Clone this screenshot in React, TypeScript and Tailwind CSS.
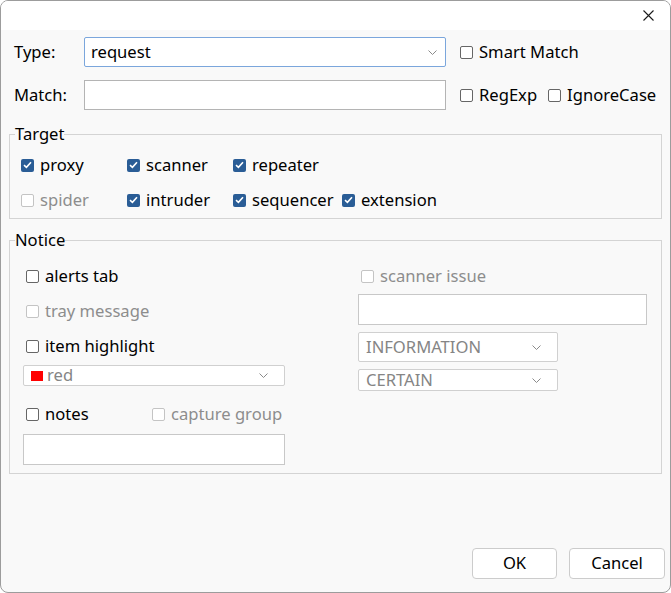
import React from "react";

const font = { fontFamily: '"Noto Sans", "Open Sans", sans-serif' };

type CheckProps = { label: string; checked?: boolean; disabled?: boolean };

const Check = ({ label, checked, disabled }: CheckProps) => (
  <label className="flex h-6 items-center gap-[6px] whitespace-nowrap">
    {checked ? (
      <span className="flex h-[13px] w-[13px] shrink-0 items-center justify-center rounded-[2px] bg-[#2a5d96]">
        <svg width="9" height="8" viewBox="0 0 9 8">
          <path d="M1 4.2 L3.4 6.4 L8 1.2" stroke="white" strokeWidth="1.6" fill="none" />
        </svg>
      </span>
    ) : (
      <span
        className={`h-[13px] w-[13px] shrink-0 rounded-[2px] border bg-white ${
          disabled ? "border-[#c4c4c4]" : "border-[#666666]"
        }`}
      />
    )}
    <span className={disabled ? "text-[#8d8d8d]" : "text-black"}>{label}</span>
  </label>
);

const Chevron = () => (
  <svg width="9" height="5" viewBox="0 0 9 5" className="shrink-0">
    <path d="M0.5 0.5 L4.5 4.5 L8.5 0.5" stroke="#8a8a8a" strokeWidth="1" fill="none" />
  </svg>
);

const Select = ({
  value,
  className,
  swatch,
}: {
  value: string;
  className: string;
  swatch?: boolean;
}) => (
  <div
    className={`flex items-center rounded-[2px] border border-[#d0d0d0] bg-white pl-[7px] pr-[16px] text-[#858585] ${className}`}
  >
    {swatch && <span className="mr-[4px] h-[10px] w-[12px] bg-[#ff0000]" />}
    <span className="flex-1 leading-none">{value}</span>
    <Chevron />
  </div>
);

export default function App() {
  return (
    <div
      style={font}
      className="flex h-[593px] w-[671px] flex-col overflow-hidden rounded-[8px] border border-[#9c9c9c] bg-[#f9f9f9] text-[16.6px] text-black"
    >
      {/* title bar */}
      <div className="flex h-[29px] shrink-0 items-center justify-end bg-white pr-[16px]">
        <svg width="11" height="11" viewBox="0 0 11 11">
          <path d="M0.5 0.5 L10.5 10.5 M10.5 0.5 L0.5 10.5" stroke="#1a1a1a" strokeWidth="1.1" />
        </svg>
      </div>

      <div className="flex flex-1 flex-col pl-[8px] pr-[8px] pt-[7px]">
        {/* type row */}
        <div className="flex h-[30px] items-center">
          <span className="w-[75px] pl-[5px]">Type:</span>
          <div className="flex h-[30px] w-[362px] items-center rounded-[2px] border border-[#7ba6dc] bg-white pl-[6px] pr-[8px]">
            <span className="flex-1">request</span>
            <Chevron />
          </div>
          <div className="ml-[14px]">
            <Check label="Smart Match" />
          </div>
        </div>

        {/* match row */}
        <div className="mt-[13px] flex h-[30px] items-center">
          <span className="w-[75px] pl-[5px]">Match:</span>
          <div className="h-[30px] w-[362px] border border-[#b4b4b4] bg-white" />
          <div className="ml-[14px] flex gap-[11px]">
            <Check label="RegExp" />
            <Check label="IgnoreCase" />
          </div>
        </div>

        {/* target */}
        <fieldset className="mt-[13px] w-[653px] border border-[#d4d4d4] px-[11px] pb-[6px]">
          <legend className="-ml-[6px] leading-[22px]">Target</legend>
          <div className="mt-[8px] flex">
            <div className="w-[106px]">
              <Check label="proxy" checked />
            </div>
            <div className="w-[106px]">
              <Check label="scanner" checked />
            </div>
            <div className="w-[109px]">
              <Check label="repeater" checked />
            </div>
          </div>
          <div className="mt-[11px] flex">
            <div className="w-[106px]">
              <Check label="spider" disabled />
            </div>
            <div className="w-[106px]">
              <Check label="intruder" checked />
            </div>
            <div className="w-[109px]">
              <Check label="sequencer" checked />
            </div>
            <Check label="extension" checked />
          </div>
        </fieldset>

        {/* notice */}
        <fieldset className="mt-[10px] w-[653px] border border-[#d4d4d4] px-[13px] pb-[8px]">
          <legend className="-ml-[8px] leading-[22px]">Notice</legend>
          <div className="mt-[13px] flex">
            <div className="flex w-[262px] flex-col">
              <div className="pl-[3px]">
                <Check label="alerts tab" />
              </div>
              <div className="mt-[11px] pl-[3px]">
                <Check label="tray message" disabled />
              </div>
              <div className="mt-[11px] pl-[3px]">
                <Check label="item highlight" />
              </div>
              <Select value="red" swatch className="mt-[7px] h-[21px] pl-[6px]" />
              <div className="mt-[16px] flex pl-[3px]">
                <div className="w-[126px]">
                  <Check label="notes" />
                </div>
                <Check label="capture group" disabled />
              </div>
              <div className="mt-[8px] h-[31px] border border-[#c8c8c8] bg-white" />
            </div>

            <div className="ml-[73px] flex w-[289px] flex-col">
              <div className="pl-[3px]">
                <Check label="scanner issue" disabled />
              </div>
              <div className="mt-[6px] h-[31px] border border-[#c8c8c8] bg-white" />
              <Select value="INFORMATION" className="mt-[7px] h-[30px] w-[200px]" />
              <Select value="CERTAIN" className="mt-[7px] h-[22px] w-[200px]" />
            </div>
          </div>
        </fieldset>

        {/* buttons */}
        <div className="mt-auto mb-[13px] flex justify-end gap-[12px]">
          <button className="h-[31px] w-[85px] rounded-[4px] border border-[#cccccc] bg-white">OK</button>
          <button className="-mr-[3px] h-[31px] w-[96px] rounded-[4px] border border-[#cccccc] bg-white">
            Cancel
          </button>
        </div>
      </div>
    </div>
  );
}
